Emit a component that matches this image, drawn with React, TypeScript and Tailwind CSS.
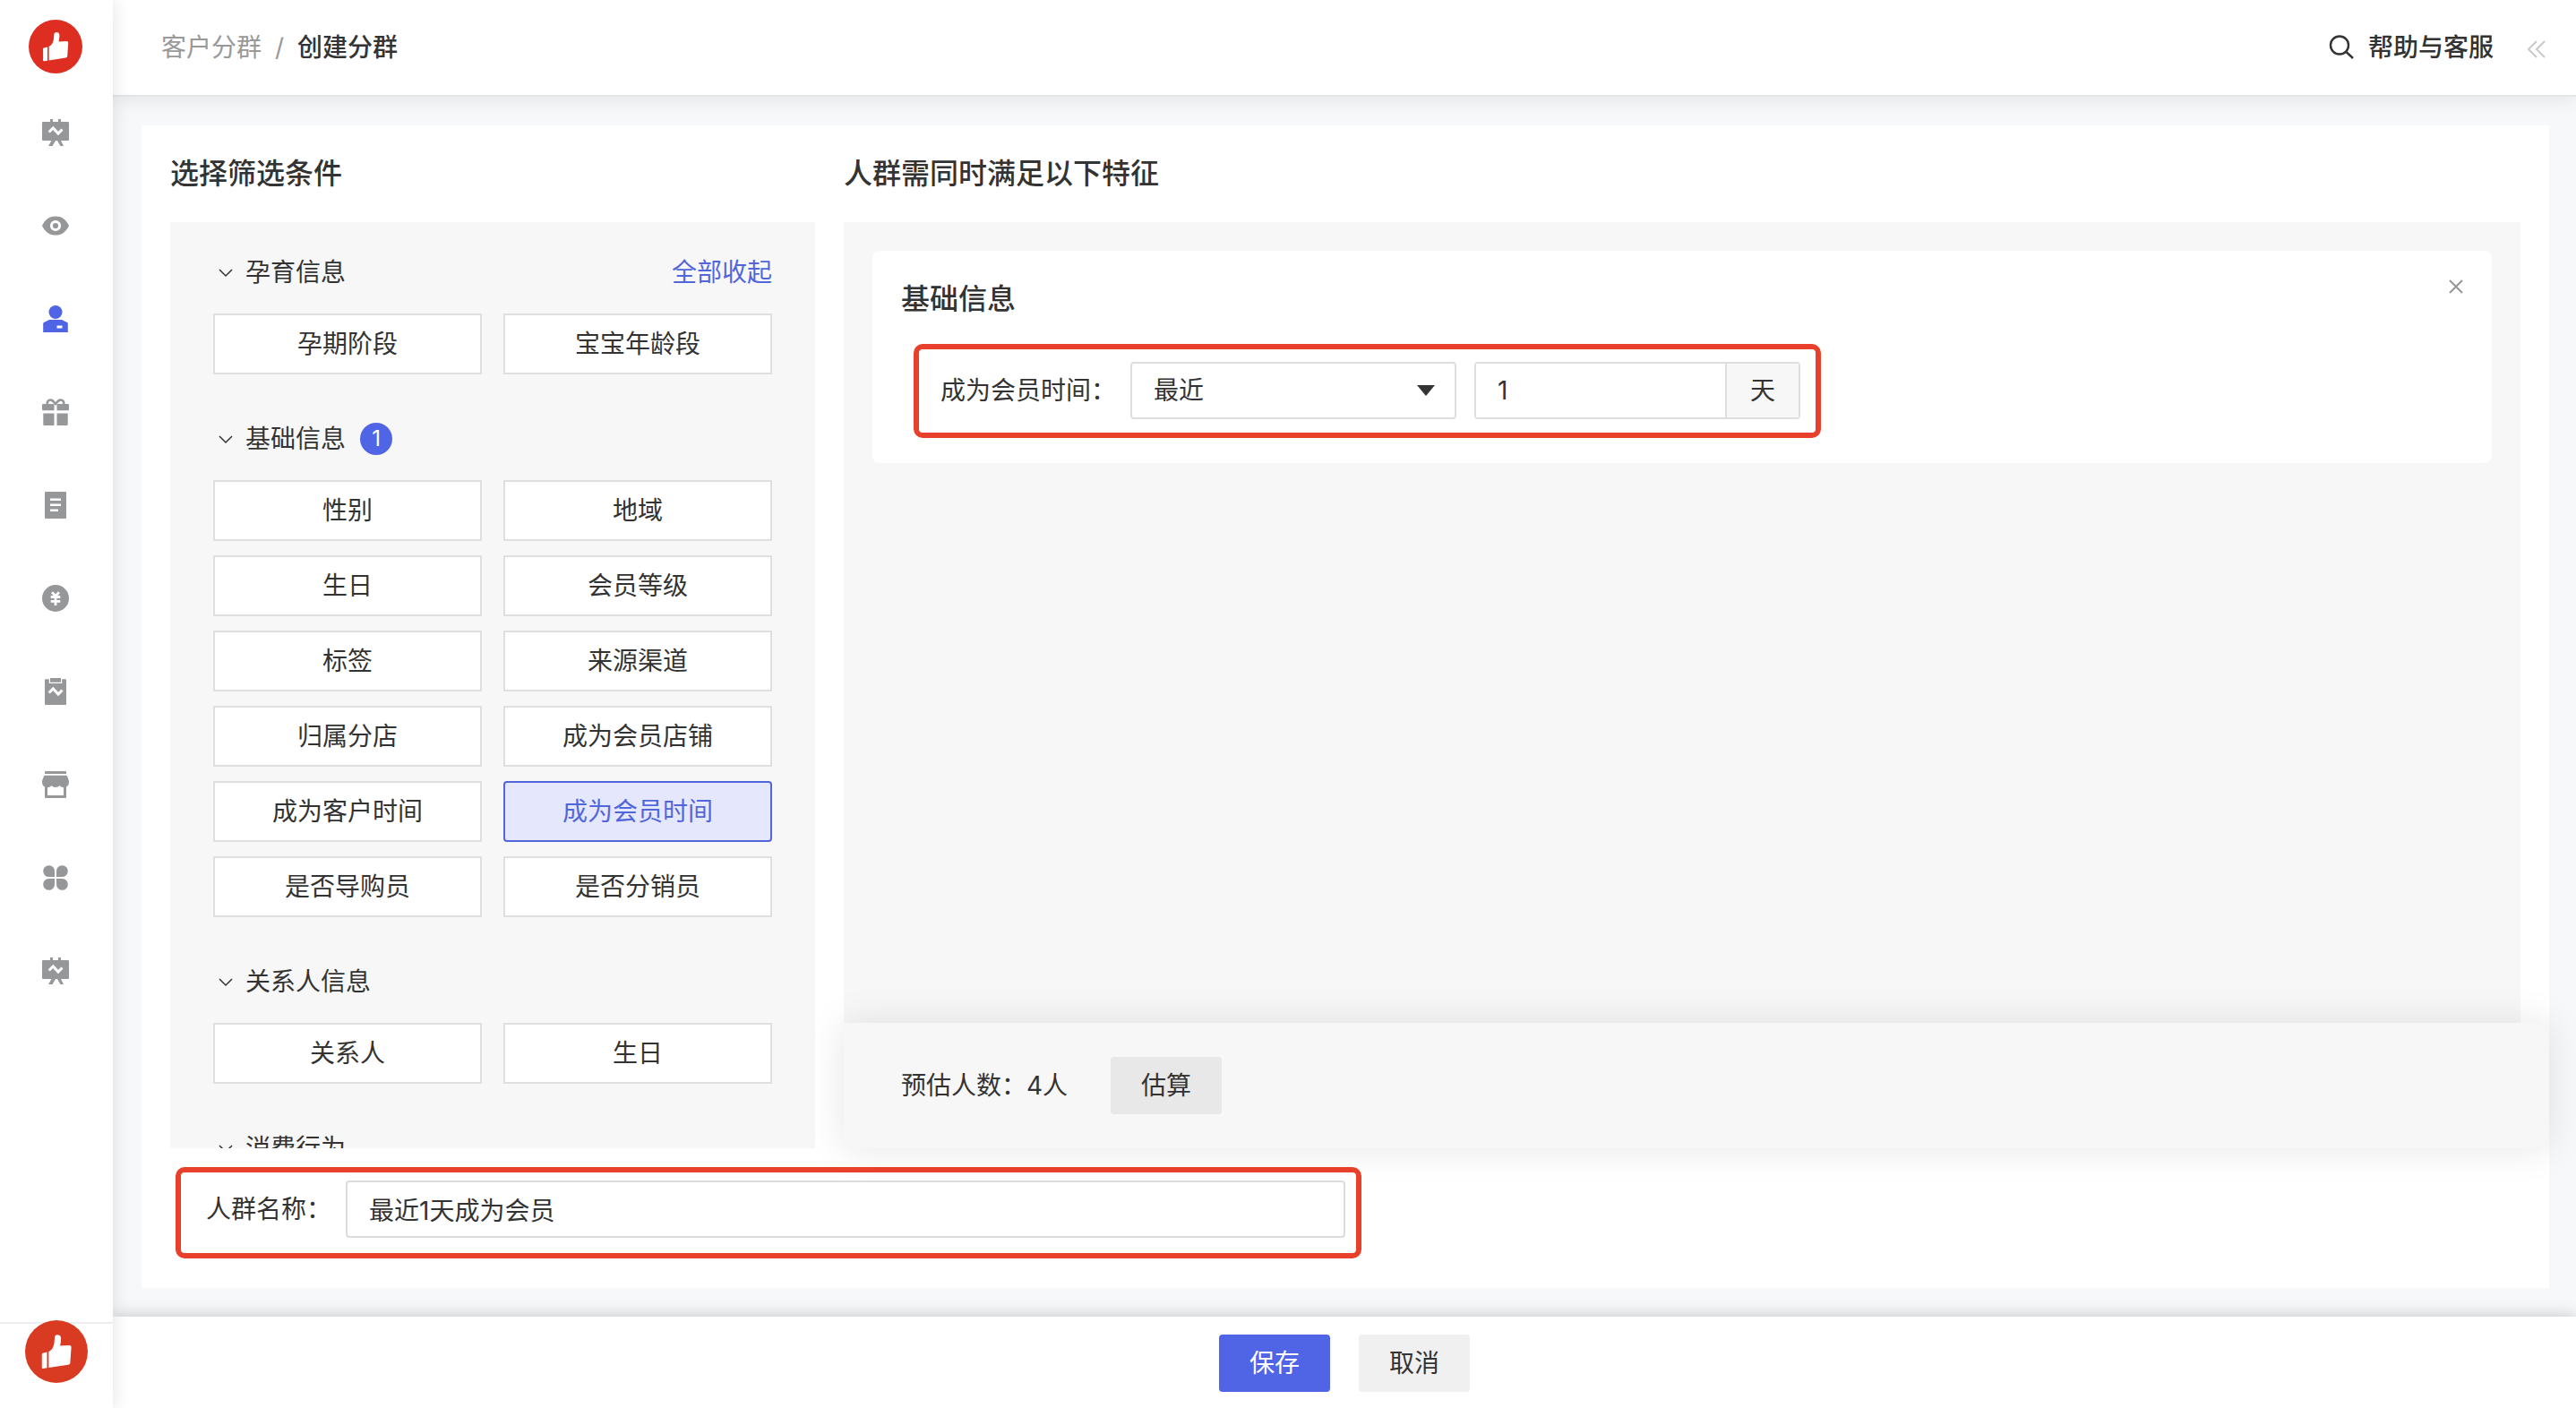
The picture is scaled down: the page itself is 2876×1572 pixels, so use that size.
import { useState, type ReactNode } from 'react';
import clsx from 'clsx';

const FILTER_GROUPS = [
    { title: '孕育信息', items: ['孕期阶段', '宝宝年龄段'] },
    {
        title: '基础信息',
        count: 1,
        items: [
            '性别',
            '地域',
            '生日',
            '会员等级',
            '标签',
            '来源渠道',
            '归属分店',
            '成为会员店铺',
            '成为客户时间',
            '成为会员时间',
            '是否导购员',
            '是否分销员'
        ]
    },
    { title: '关系人信息', items: ['关系人', '生日'] },
    { title: '消费行为', items: [] }
];

const boardIcon = (
    <>
        <path d="M9 0h3v3h6V0h3v3h8a1 1 0 0 1 1 1v19a1 1 0 0 1-1 1h-8l3 6h-3.500l-3.500-6h-2l-3.500 6H7l3.500-6H1a1 1 0 0 1-1-1V4a1 1 0 0 1 1-1h8z" />
        <path d="M7.700 14.500 12.300 10l5.700 6 4.500-4.500" fill="none" stroke="#fff" strokeWidth="3" />
    </>
);

const NAV_ITEMS: { label: string; icon: ReactNode; active?: boolean }[] = [
    { label: '概况', icon: boardIcon },
    {
        label: '浏览',
        icon: (
            <>
                <path d="M15 4.500c6.500 0 11.500 3 15 10.500-3.500 7.500-8.500 10.500-15 10.500S3.500 22.500 0 15C3.500 7.500 8.500 4.500 15 4.500z" />
                <circle cx="15" cy="15" r="4.600" fill="none" stroke="#fff" strokeWidth="3" />
            </>
        )
    },
    {
        label: '客户',
        active: true,
        icon: (
            <>
                <circle cx="15" cy="7.500" r="7.500" />
                <path d="M8 16h14l6 3a1.500 1.500 0 0 1 .8 1.400V30H1.200v-9.600A1.500 1.500 0 0 1 2 19z" />
                <path d="M16.500 22.500h6v3h-6z" fill="#fff" />
            </>
        )
    },
    {
        label: '营销',
        icon: (
            <>
                <path d="M1.200 6h12.300v7.200H1.200A1.200 1.200 0 0 1 0 12V7.200A1.200 1.200 0 0 1 1.200 6zM16.500 6h12.300A1.200 1.200 0 0 1 30 7.200V12a1.200 1.200 0 0 1-1.200 1.200H16.500zM1.300 16.500h12.200V30H2.500a1.200 1.200 0 0 1-1.200-1.200zM16.500 16.500h12.200v12.300a1.200 1.200 0 0 1-1.200 1.200h-11z" />
                <path
                    d="M6 7C5 3 7.500 1.200 10 1.600S13.500 4.500 15 6c1.500-1.500 2.500-4 5-4.400S25 3 24 7"
                    fill="none"
                    stroke="currentColor"
                    strokeWidth="2.600"
                />
            </>
        )
    },
    {
        label: '订单',
        icon: (
            <>
                <rect x="3" width="24" height="30" rx="1" />
                <path d="M9 7.500h12v2.600H9zM9 13.500h12v2.600H9zM9 19.500h9v2.600H9z" fill="#fff" />
            </>
        )
    },
    {
        label: '资产',
        icon: (
            <>
                <circle cx="15" cy="15" r="15" />
                <path
                    d="m11 8.300 4 4.200 4-4.200M9.700 13.500h10.600M9.700 18.300h10.600M15 12.500V23"
                    fill="none"
                    stroke="#fff"
                    strokeWidth="2.800"
                />
            </>
        )
    },
    {
        label: '数据',
        icon: (
            <>
                <path d="M4 1.300h3.800v4.700h14.400V1.300H26a1 1 0 0 1 1 1V29a1 1 0 0 1-1 1H4a1 1 0 0 1-1-1V2.300a1 1 0 0 1 1-1zM9 0h12v4.800H9z" />
                <path d="m7.700 16.500 4.600-4.500 5.700 6 4.500-4.500" fill="none" stroke="#fff" strokeWidth="3" />
            </>
        )
    },
    {
        label: '店铺',
        icon: (
            <>
                <path d="M4 0h22a1 1 0 0 1 1 1v2H3V1a1 1 0 0 1 1-1zM3.500 4.700h23a2 2 0 0 1 1.700 1.200L30 11c.2 3.500-1 5.500-3 6.300V29a1 1 0 0 1-1 1H4a1 1 0 0 1-1-1V17.300C1 16.500-.2 14.500 0 11l1.800-5.100a2 2 0 0 1 1.700-1.200z" />
                <path d="M6 18c2 0 3.500-.5 4.500-2 1.500 2.500 7.500 2.500 9 0 1 1.500 2.500 2 4.500 2v9H6z" fill="#fff" />
            </>
        )
    },
    {
        label: '应用',
        icon: (
            <path d="M7.600 1.200a6.300 6.300 0 0 1 6.400 6.400V14H7.600a6.400 6.400 0 0 1 0-12.800zM22.400 1.200a6.400 6.400 0 0 1 0 12.800H16V7.600a6.300 6.300 0 0 1 6.400-6.400zM7.600 16H14v6.400A6.400 6.400 0 1 1 7.600 16zM16 16h6.400a6.400 6.400 0 1 1-6.400 6.400z" />
        )
    },
    { label: '报表', icon: boardIcon }
];

function Logo({ className }: { className?: string }) {
    return (
        <svg viewBox="0 0 60 60" className={className} aria-hidden>
            <circle cx="30" cy="30" r="30" />
            <path
                d="M17 31.500 21 30.500V45.700L17 46.300a.8.8 0 0 1-.9-.8V32.500a1 1 0 0 1 .9-1zM22.600 30c3.500-1.500 5-5 5.400-9.500l.4-4.500c.3-2.600 5.200-2.800 5.800.3.500 2.700-.2 5.500-.7 8.200l8.800-.4c1.300 0 2 .8 1.900 2l-1 14.400c-.1 1.200-.8 1.900-2 2.100L22.600 45.500z"
                fill="#fff"
            />
        </svg>
    );
}

function Sidebar() {
    return (
        <aside className="z-20 flex w-[126px] shrink-0 flex-col justify-between bg-white shadow-[0_0_20px_rgba(0,0,0,0.12)]">
            <div className="flex flex-col items-center pt-[22px] pr-0.5">
                <a href="#" aria-label="首页" className="mb-[51px]">
                    <Logo className="size-[60px] fill-[#dd2e21]" />
                </a>
                <nav className="flex flex-col gap-[74px]">
                    {NAV_ITEMS.map((item) => (
                        <a key={item.label} href="#" aria-label={item.label}>
                            <svg
                                viewBox="0 0 30 30"
                                fill="currentColor"
                                className={clsx('size-[30px]', item.active ? 'text-[#5064e6]' : 'text-[#969799]')}
                            >
                                {item.icon}
                            </svg>
                        </a>
                    ))}
                </nav>
            </div>
            <div className="flex justify-center border-t-2 border-[#ebedf0] pb-7">
                <a href="#" aria-label="账号" className="-mt-1">
                    <Logo className="size-[70px] fill-[#d93a22]" />
                </a>
            </div>
        </aside>
    );
}

function Header() {
    return (
        <header className="z-10 flex h-[108px] shrink-0 items-center justify-between border-b-2 border-[#e4e5e7] bg-white pr-8 pl-[54px] shadow-[0_4px_20px_rgba(0,0,0,0.08)]">
            <nav className="flex items-center gap-[15px]">
                <a href="#" className="text-[#999]">客户分群</a>
                <span className="text-[#999]">/</span>
                <span className="font-medium">创建分群</span>
            </nav>
            <div className="flex items-center">
                <button type="button" className="flex items-center gap-4 font-medium">
                    <svg viewBox="0 0 28 28" className="size-7" fill="none" stroke="currentColor" strokeWidth="2.400">
                        <circle cx="12" cy="11.500" r="10" />
                        <path d="m19 18.500 8 7.500" />
                    </svg>
                    帮助与客服
                </button>
                <button type="button" aria-label="收起" className="ml-9">
                    <svg viewBox="0 0 24 24" className="size-6" fill="none" stroke="#c8c9cc" strokeWidth="2">
                        <path d="m12 5-9 9 9 9M21 5l-9 9 9 9" />
                    </svg>
                </button>
            </div>
        </header>
    );
}

function FilterPanel() {
    const [selected, setSelected] = useState('成为会员时间');

    return (
        <div className="flex min-h-0 flex-1 flex-col gap-[52px] overflow-hidden bg-[#f7f7f7] px-12 pt-9">
            {FILTER_GROUPS.map((group, i) => (
                <section key={group.title} className="shrink-0">
                    <div className="flex h-10 items-center">
                        <button type="button" className="flex items-center gap-3.5 pl-1.5">
                            <svg viewBox="0 0 16 16" className="size-4" fill="none" stroke="currentColor" strokeWidth="1.500">
                                <path d="m1 5 7 7 7-7" />
                            </svg>
                            {group.title}
                        </button>
                        {group.count && (
                            <span className="ml-4 flex size-9 items-center justify-center rounded-full bg-[#5064e6] text-2xl text-white">
                                {group.count}
                            </span>
                        )}
                        {i === 0 && (
                            <a href="#" className="ml-auto text-[#5266dc]">全部收起</a>
                        )}
                    </div>
                    {group.items.length > 0 && (
                        <div className="mt-[26px] grid grid-cols-2 gap-x-6 gap-y-4">
                            {group.items.map((item) => (
                                <button
                                    key={item}
                                    type="button"
                                    onClick={() => setSelected(item)}
                                    className={clsx(
                                        'h-[68px] border-2',
                                        selected === item
                                            ? 'rounded-sm border-[#5266dc] bg-[#e5e8fc] text-[#5266dc]'
                                            : 'border-[#dfdfdf] bg-white'
                                    )}
                                >
                                    {item}
                                </button>
                            ))}
                        </div>
                    )}
                </section>
            ))}
        </div>
    );
}

function ConditionPanel() {
    return (
        <div className="flex min-h-0 flex-1 flex-col">
            <div className="min-h-0 flex-1 bg-[#f7f7f7] p-8">
                <section className="relative rounded-lg bg-white px-8 pt-8 pb-7">
                    <h3 className="text-[32px] leading-11 font-medium">基础信息</h3>
                    <button type="button" aria-label="删除" className="absolute top-8 right-8">
                        <svg viewBox="0 0 16 16" className="size-4" fill="none" stroke="#969799" strokeWidth="2">
                            <path d="m1 1 14 14M15 1 1 15" />
                        </svg>
                    </button>
                    <div className="mt-7 ml-3.5 flex w-fit items-center rounded-[10px] border-6 border-[#e8402a] pt-3.5 pr-[17px] pb-[15px] pl-6">
                        <label htmlFor="range-type" className="w-[212px]">成为会员时间：</label>
                        <div className="relative w-[364px]">
                            <select
                                id="range-type"
                                defaultValue="最近"
                                className="h-16 w-full appearance-none rounded-sm border-2 border-[#dcdee0] bg-white pl-6"
                            >
                                <option>最近</option>
                                <option>介于</option>
                            </select>
                            <svg viewBox="0 0 20 12" className="pointer-events-none absolute top-[26px] right-6 w-5 fill-[#333]">
                                <path d="M0 0h20L10 12z" />
                            </svg>
                        </div>
                        <div className="ml-5 flex h-16 w-[364px] overflow-hidden rounded-sm border-2 border-[#dcdee0]">
                            <input
                                aria-label="天数"
                                defaultValue="1"
                                className="min-w-0 flex-1 border-r-2 border-[#dcdee0] bg-white px-6 outline-none"
                            />
                            <span className="flex w-20 items-center justify-center bg-[#f7f7f7]">天</span>
                        </div>
                    </div>
                </section>
            </div>
            <div className="relative -mr-8 flex h-[140px] shrink-0 items-center bg-[#f7f7f7] px-16 shadow-[0_0_40px_rgba(0,0,0,0.1)]">
                <span className="mr-12">预估人数：4人</span>
                <button type="button" className="h-16 w-[124px] rounded-sm bg-[#e8e8e8]">估算</button>
            </div>
        </div>
    );
}

export default function App() {
    return (
        <div className="flex h-screen overflow-hidden bg-[#f7f8fa] font-['Inter','Noto_Sans_CJK_SC',sans-serif] text-[28px] leading-10 text-[#333]">
            <Sidebar />
            <div className="flex min-w-0 flex-1 flex-col">
                <Header />
                <main className="mt-8 mr-[30px] mb-8 ml-8 flex min-h-0 flex-1 flex-col bg-white px-8 pt-8 pb-[33px]">
                    <div className="flex min-h-0 flex-1 gap-8">
                        <div className="flex w-[720px] shrink-0 flex-col">
                            <h2 className="mb-8 text-[32px] leading-11 font-medium">选择筛选条件</h2>
                            <FilterPanel />
                        </div>
                        <div className="flex min-w-0 flex-1 flex-col">
                            <h2 className="mb-8 text-[32px] leading-11 font-medium">人群需同时满足以下特征</h2>
                            <ConditionPanel />
                        </div>
                    </div>
                    <div className="relative mt-[21px] ml-1.5 flex w-[1324px] items-center rounded-[10px] border-6 border-[#e8402a] pt-[9px] pr-3 pb-[17px] pl-7">
                        <label htmlFor="crowd-name" className="w-[156px]">人群名称：</label>
                        <input
                            id="crowd-name"
                            defaultValue="最近1天成为会员"
                            className="h-16 min-w-0 flex-1 rounded-sm border-2 border-[#dcdcdc] bg-white px-6 outline-none"
                        />
                    </div>
                </main>
                <footer className="z-10 flex shrink-0 justify-center gap-8 bg-white pt-5 pb-[18px] shadow-[0_-2px_16px_rgba(0,0,0,0.18)]">
                    <button type="button" className="h-16 w-[124px] rounded-sm bg-[#5064e6] text-white">保存</button>
                    <button type="button" className="h-16 w-[124px] rounded-sm bg-[#f0f0f0]">取消</button>
                </footer>
            </div>
        </div>
    );
}
